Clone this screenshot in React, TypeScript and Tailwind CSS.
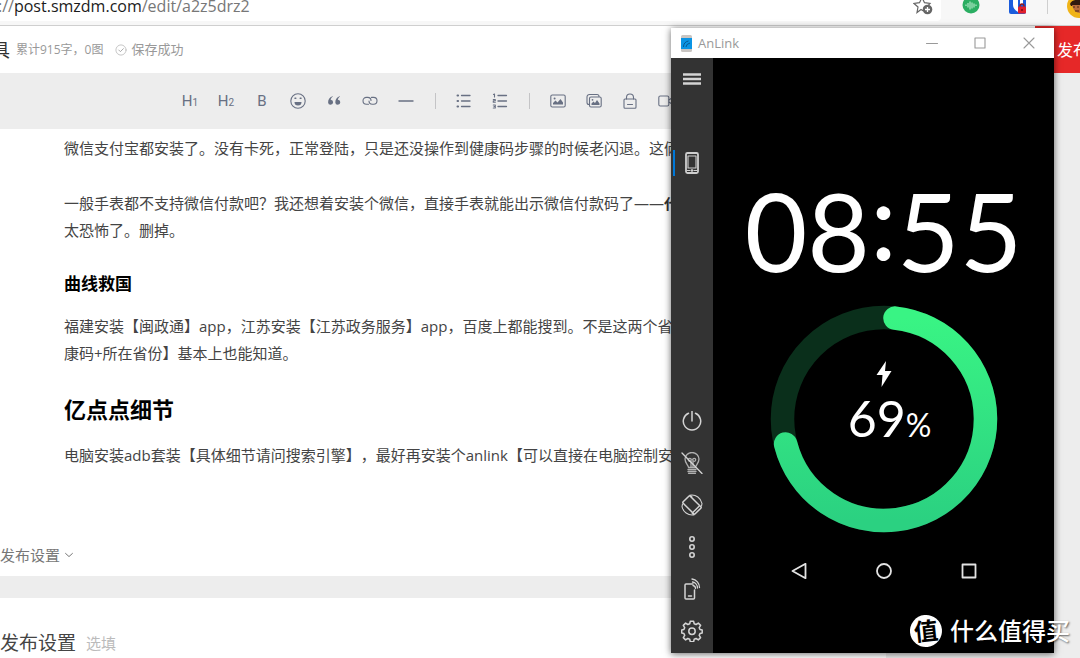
import React from "react";

interface IconProps {
  children: React.ReactNode;
  size?: string;
  box?: string;
}

const Icon: React.FC<IconProps> = ({ children, size = "size-4", box = "0 0 16 16" }) => (
  <svg
    className={size}
    viewBox={box}
    fill="none"
    stroke="currentColor"
    strokeWidth="1.1"
    strokeLinecap="round"
    strokeLinejoin="round"
    aria-hidden="true"
  >
    {children}
  </svg>
);

interface ToolProps {
  label: string;
  children: React.ReactNode;
}

const Tool: React.FC<ToolProps> = ({ label, children }) => (
  <button
    type="button"
    aria-label={label}
    className="flex h-9 w-9 shrink-0 items-center justify-center text-[#687083]"
  >
    {children}
  </button>
);

const Divider = () => (
  <div className="flex w-[22px] shrink-0 justify-center">
    <div className="h-4 w-px bg-[#c4c4c6]" />
  </div>
);

const SideButton: React.FC<ToolProps> = ({ label, children }) => (
  <button
    type="button"
    aria-label={label}
    className="flex size-[42px] items-center justify-center text-[#d4d4d4]"
  >
    {children}
  </button>
);

const BrowserBar = () => (
  <div className="flex h-[26px] items-start border-b border-[#cfcfcf] bg-[#f7f7f7]">
    <div className="flex h-[21px] flex-1 items-start justify-between rounded-br bg-white pr-2">
      <div className="-mt-1.5 -ml-0.5 text-base leading-6 whitespace-nowrap text-[#777]">
        ://<span className="text-[#1b1b1b]">post.smzdm.com</span>/edit/a2z5drz2
      </div>
      <button type="button" aria-label="收藏" className="-mt-1 text-[#666]">
        <svg className="size-5" viewBox="0 0 20 20" fill="none" aria-hidden="true">
          <path
            d="M10.500 15 8 13.500 4 16.500 5 11 1 7.500 6.500 6.700 9 1.500 11.500 6.700 17 7.500 15.500 9"
            stroke="currentColor"
            strokeWidth="1.200"
          />
          <circle cx="14.500" cy="13.500" r="4.800" fill="currentColor" />
          <path d="M12 13.500h5M14.500 11v5" stroke="#fff" strokeWidth="1.300" />
        </svg>
      </button>
    </div>
    <div className="flex w-[139px] items-start">
      <svg className="ml-[21px] h-[14px] w-[18px]" viewBox="0 0 18 14" aria-hidden="true">
        <circle cx="9" cy="5" r="8.500" fill="#2bae62" />
        <path
          d="M4 4.500v1.500M6 3v4.500M8 1.500v8M10 2.500v6M12 3.500v4M14 4.500v1.500"
          stroke="#c9f2d8"
          strokeWidth="1"
        />
      </svg>
      <svg className="ml-[29px] h-[14px] w-[18px]" viewBox="0 0 18 14" aria-hidden="true">
        <path d="M0 0h17v12a2 2 0 0 1-2 2H2a2 2 0 0 1-2-2z" fill="#1b5cdc" />
        <path d="M4 0h5v12Q4 9 4 5z" fill="#fff" />
        <path d="M11 0h3v4h-3z" fill="#fff" />
        <path d="M11 7V6a2 2 0 0 1 4 0v1" stroke="#8f1820" strokeWidth="1.300" fill="none" />
        <rect x="9" y="6.500" width="8" height="7" rx="1" fill="#e2202c" />
        <circle cx="13" cy="10" r="1" fill="#701018" />
      </svg>
      <div className="ml-5 h-[14px] w-px bg-[#cfcfcf]" />
      <svg className="ml-[19px] h-[18px] w-[13px]" viewBox="0 0 13 18" aria-hidden="true">
        <circle cx="12" cy="6" r="12" fill="#f0b419" />
        <path d="M3 4Q5-1 13 0v6H4z" fill="#30190e" />
        <path d="M5 5h8v8q-6 0-8-8z" fill="#b96c3d" />
        <path d="M6 7h2M10 7h2M8 11h4" stroke="#4d2817" strokeWidth="1" />
      </svg>
    </div>
  </div>
);

const PostHeader = () => (
  <header className="flex h-[47px] items-center bg-white">
    <span className="-ml-2 text-lg text-[#333]">具</span>
    <span className="ml-1.5 text-xs whitespace-nowrap text-[#999]">累计915字，0图</span>
    <span className="ml-3 flex items-center gap-1 text-[13px] whitespace-nowrap text-[#999]">
      <Icon size="size-3">
        <circle cx="8" cy="8" r="6.800" stroke="#bbb" />
        <path d="m5 8 2.200 2.200 4-4" />
      </Icon>
      保存成功
    </span>
    <button
      type="button"
      className="ml-auto h-full w-[45px] overflow-hidden bg-[#e62828] pl-[22px] text-left text-base whitespace-nowrap text-white"
    >
      发布
    </button>
  </header>
);

const Toolbar = () => (
  <div className="flex h-14 items-center overflow-hidden bg-[#ededed] pl-[172px]">
    <Tool label="一级标题">
      <span className="font-[Roboto] text-[15px]">
        H<span className="text-[10px]">1</span>
      </span>
    </Tool>
    <Tool label="二级标题">
      <span className="font-[Roboto] text-[15px]">
        H<span className="text-[10px]">2</span>
      </span>
    </Tool>
    <Tool label="加粗">
      <span className="font-[Roboto] text-[15px]">B</span>
    </Tool>
    <Tool label="表情">
      <Icon>
        <circle cx="8" cy="8" r="7.200" />
        <path d="M4.500 9h7a3.500 3.500 0 0 1-7 0z" fill="currentColor" stroke="none" />
        <path d="M5 5.300h.8M10.200 5.300h.8" strokeWidth="1.500" />
      </Icon>
    </Tool>
    <Tool label="引用">
      <Icon>
        <g fill="currentColor" stroke="none">
          <path d="M6.800 3.800C5.400 4.500 4.700 5.800 4.700 6.800a2.500 2.500 0 1 1-2.600 2.600C2 6.200 3.800 4 6.800 3.200z" />
          <path d="M14 3.800c-1.400.7-2.100 2-2.100 3a2.500 2.500 0 1 1-2.600 2.600C9.200 6.200 11 4 14 3.200z" />
        </g>
      </Icon>
    </Tool>
    <Tool label="链接">
      <Icon>
        <path d="M6.500 11.200H4.400a3.400 3.400 0 0 1 0-6.800h1.300C8 4.400 9 6 9 7.500" />
        <path d="M9.500 4.400h2.100a3.400 3.400 0 0 1 0 6.800h-1.300C8 11.200 7 9.600 7 8.100" />
      </Icon>
    </Tool>
    <Tool label="分割线">
      <Icon>
        <path d="M1 8h14" strokeWidth="1.400" />
      </Icon>
    </Tool>
    <Divider />
    <Tool label="无序列表">
      <Icon>
        <path d="M5.500 2.500H14M5.500 8H14M5.500 13.500H14" strokeWidth="1.300" />
        <path d="M1.500 2.500h.6M1.500 8h.6M1.500 13.500h.6" strokeWidth="2" />
      </Icon>
    </Tool>
    <Tool label="有序列表">
      <Icon>
        <path d="M6 2.500h8.500M6 8h8.500M6 13.500h8.500" strokeWidth="1.300" />
        <path d="m1.500 1.500 1-.5v3M1.300 6.500h2v1.300h-2v1.500h2M1.300 12h2v3h-2M2 13.500h1.300" />
      </Icon>
    </Tool>
    <Divider />
    <Tool label="图片">
      <Icon>
        <rect x=".8" y="2" width="14.400" height="12" rx="1.500" />
        <path d="M3 11.500V10l2.500-2.500L7.500 9.500 10.500 6l2.500 3.500v2z" fill="currentColor" stroke="none" />
        <circle cx="4.600" cy="5.400" r="1" fill="currentColor" stroke="none" />
      </Icon>
    </Tool>
    <Tool label="图集">
      <Icon>
        <rect x="3.500" y="4" width="11.700" height="10" rx="1.500" />
        <path d="M3 11.500a2 2 0 0 1-2-2V4a2.500 2.500 0 0 1 2.500-2.500H11A2 2 0 0 1 13 3.500" />
        <path d="M5.500 12v-1.500l2-2L9 10l2-3 2.500 3.500V12z" fill="currentColor" stroke="none" />
        <circle cx="6.500" cy="6.800" r=".9" fill="currentColor" stroke="none" />
      </Icon>
    </Tool>
    <Tool label="锁定内容">
      <Icon>
        <rect x="2" y="6" width="12" height="9.300" rx="1" />
        <path d="M4.500 6V4.500a3.500 3.500 0 0 1 7 0V6M5.500 11.500h5" />
      </Icon>
    </Tool>
    <Tool label="视频">
      <Icon>
        <rect x=".8" y="3" width="10" height="10" rx="1.500" />
        <path d="m10.800 7 4-2.500v7l-4-2.500" />
      </Icon>
    </Tool>
  </div>
);

const Article = () => (
  <article className="overflow-hidden bg-white pt-1.5 pb-[7px] text-[15px] leading-[27px] whitespace-nowrap text-[#444] [text-spacing-trim:space-all]">
    <div className="pl-16">
      <p>微信支付宝都安装了。没有卡死，正常登陆，只是还没操作到健康码步骤的时候老闪退。这俩太</p>
      <p className="mt-7">
        一般手表都不支持微信付款吧？我还想着安装个微信，直接手表就能出示微信付款码了——
        <strong className="text-[#333]">代</strong>
        <br />
        太恐怖了。删掉。
      </p>
      <h3 className="mt-[26px] text-[17px] leading-7 font-bold text-black">曲线救国</h3>
      <p className="mt-[15px]">
        福建安装【闽政通】app，江苏安装【江苏政务服务】app，百度上都能搜到。不是这两个省的
        <br />
        康码+所在省份】基本上也能知道。
      </p>
      <h2 className="mt-[26px] text-[22px] leading-8 font-bold text-black">亿点点细节</h2>
      <p className="mt-[17px]">
        电脑安装adb套装【具体细节请问搜索引擎】，最好再安装个anlink【可以直接在电脑控制安卓
      </p>
    </div>
    <button type="button" className="mt-[72px] flex h-7 items-center gap-1 text-[#777]">
      发布设置
      <Icon size="size-2.5">
        <path d="m2.500 5.500 5.500 5 5.500-5" strokeWidth="1.600" />
      </Icon>
    </button>
  </article>
);

const BatteryRing = () => (
  <div className="relative mt-5 size-[228px]">
    <svg className="size-full" viewBox="0 0 228 228" fill="none" aria-hidden="true">
      <defs>
        <linearGradient id="charge" x1="0" y1="0" x2="0" y2="1">
          <stop offset="0" stopColor="#39f484" />
          <stop offset="1" stopColor="#2bd181" />
        </linearGradient>
      </defs>
      <circle cx="114" cy="114" r="101.500" stroke="#0a2f1b" strokeWidth="23.500" />
      <path
        d="M125 13.100A101.500 101.500 0 1 1 15.600 139"
        stroke="url(#charge)"
        strokeWidth="23.500"
        strokeLinecap="round"
      />
    </svg>
    <div className="absolute inset-0 flex flex-col items-center pt-14 text-white">
      <svg className="h-[26px] w-4" viewBox="0 0 16 26" fill="currentColor" aria-hidden="true">
        <path d="M10 0 .5 14h6L5.500 26 15.500 10H9z" />
      </svg>
      <div className="ml-3 font-[Lato] text-[50px] leading-[62px]">
        69<span className="text-[32px]">%</span>
      </div>
    </div>
  </div>
);

const PhoneScreen = () => (
  <div className="flex flex-1 flex-col items-center bg-black">
    <time
      dateTime="08:55"
      className="mt-[117px] flex h-[110px] items-center font-[Lato] text-[108px] leading-[132px] text-white"
    >
      <span>08</span>
      <span className="pb-6">:</span>
      <span>55</span>
    </time>
    <BatteryRing />
    <nav className="mt-[30px] flex text-[#e3e3e3]">
      <button type="button" aria-label="返回" className="flex w-[85px] justify-center">
        <Icon>
          <path d="M1.500 8 14.500.8v14.400z" strokeWidth="1.800" />
        </Icon>
      </button>
      <button type="button" aria-label="主屏幕" className="flex w-[85px] justify-center">
        <Icon>
          <circle cx="8" cy="8" r="7" strokeWidth="1.800" />
        </Icon>
      </button>
      <button type="button" aria-label="最近任务" className="flex w-[85px] justify-center">
        <Icon>
          <rect x="1.500" y="1.500" width="13" height="13" strokeWidth="1.800" />
        </Icon>
      </button>
    </nav>
  </div>
);

const Sidebar = () => (
  <aside className="flex w-[42px] flex-col bg-[#333] pb-px">
    <SideButton label="菜单">
      <Icon size="size-5" box="0 0 20 20">
        <path d="M1 5.500h18M1 10h18M1 14.500h18" strokeWidth="2.600" strokeLinecap="butt" />
      </Icon>
    </SideButton>
    <div className="mt-[42px] flex h-[42px] items-center">
      <div className="ml-0.5 h-[26px] w-0.5 bg-[#0078d7]" />
      <button
        type="button"
        aria-label="设备"
        className="flex flex-1 justify-center pr-1 text-[#cfcfcf]"
      >
        <Icon size="h-6 w-4" box="0 0 16 24">
          <rect x="2" y="2" width="12" height="20" rx="1.500" strokeWidth="1.800" />
          <path d="M4 5h8v12H4zM3 19.500h3M10 19.500h3" />
          <circle cx="8" cy="19.500" r=".8" fill="currentColor" />
        </Icon>
      </button>
    </div>
    <div className="mt-auto">
      <SideButton label="电源">
        <Icon size="size-5" box="0 0 20 20">
          <path d="M6.500 2.300a8.700 8.700 0 1 0 7 0M10 0v10" strokeWidth="1.500" />
        </Icon>
      </SideButton>
      <SideButton label="关闭屏幕">
        <Icon size="size-[22px]" box="0 0 22 22">
          <g stroke="#b0b0b0" strokeWidth="1.300">
            <path d="M7.500 15.500c0-2.500-3.500-4-3.500-8.500a7 6.500 0 0 1 14 0c0 4.500-3.500 6-3.500 8.500z" />
            <path d="M7 17.500h8M7 19.500h8M7.500 21.300h7" />
            <path d="M10 15V9.500M12 15V9.500" />
            <circle cx="8.800" cy="7.800" r="1.500" />
            <circle cx="13.200" cy="7.800" r="1.500" />
          </g>
          <path d="m1 1 20 20.500" strokeWidth="1.300" />
        </Icon>
      </SideButton>
      <SideButton label="旋转">
        <Icon size="size-[22px]" box="0 0 22 22">
          <rect x="6" y="2.500" width="10" height="17" rx="1" transform="rotate(-45 11 11)" strokeWidth="1.500" />
          <path d="m12.300 18 5.800-5.800" strokeWidth="1.400" />
          <path d="M9 1.200c6-1 11 3 12 8.300l-.5 2.500M13 20.800c-6 1-11-3-12-8.300L1.500 10M9 1.200 11 3M13 20.800 11 19" />
        </Icon>
      </SideButton>
      <SideButton label="更多">
        <Icon size="h-6 w-3" box="0 0 12 24">
          <g strokeWidth="1.600">
            <circle cx="6" cy="4" r="2.200" />
            <circle cx="6" cy="12" r="2.200" />
            <circle cx="6" cy="20" r="2.200" />
          </g>
        </Icon>
      </SideButton>
      <SideButton label="投屏">
        <Icon size="size-[22px]" box="0 0 22 22">
          <path d="M12 6H5a1 1 0 0 0-1 1v13a1 1 0 0 0 1 1h7.500a1 1 0 0 0 1-1v-8M7.500 18h3" strokeWidth="1.500" />
          <path d="M12 7.500a3 3 0 0 1 2.500 3M11.500 4a6 6 0 0 1 5 6M11 1a8.500 8.500 0 0 1 7.500 8.500" strokeWidth="1.300" />
        </Icon>
      </SideButton>
      <SideButton label="设置">
        <Icon size="size-[22px]" box="0 0 22 22">
          <path
            d="m9.300 1.200-.6 2.500-1.900.8-2.200-1.400-2.300 2.300 1.400 2.200-.8 1.900-2.200.5v3l2.200.5.8 1.900-1.400 2.200 2.300 2.300 2.200-1.400 1.900.8.600 2.500h3.300l.6-2.500 1.900-.8 2.200 1.400 2.300-2.300-1.400-2.200.8-1.900 2.200-.5v-3l-2.200-.5-.8-1.900 1.400-2.200-2.300-2.300-2.200 1.400-1.900-.8-.6-2.500z"
            strokeWidth="1.500"
          />
          <circle cx="11" cy="11.300" r="3.200" strokeWidth="1.500" />
        </Icon>
      </SideButton>
    </div>
  </aside>
);

const AnLinkWindow = () => (
  <section className="absolute top-7 right-[26px] flex h-[625px] w-[383px] flex-col bg-white shadow-[0_1px_7px_rgba(0,0,0,0.6)]">
    <div className="flex h-[30px] items-center text-[#999]">
      <svg className="ml-2.5 h-[17px] w-[11px]" viewBox="0 0 11 17" aria-hidden="true">
        <rect width="11" height="17" rx="1.500" fill="#c9c5c2" />
        <path d="M0 3h11v11H0z" fill="#0b94e4" />
        <path d="M2.500 12q0-5 5-6M5 12q0-3 4-4" stroke="#075a91" fill="none" />
      </svg>
      <h1 className="ml-1.5 flex-1 text-[13px] leading-5">AnLink</h1>
      <button type="button" aria-label="最小化" className="flex w-12 justify-center">
        <Icon size="size-3" box="0 0 12 12">
          <path d="M.5 6.500h11" />
        </Icon>
      </button>
      <button type="button" aria-label="最大化" className="flex w-12 justify-center">
        <Icon size="size-3" box="0 0 12 12">
          <path d="M1 1h10v10H1z" />
        </Icon>
      </button>
      <button type="button" aria-label="关闭" className="flex w-[50px] justify-center">
        <Icon size="size-3" box="0 0 12 12">
          <path d="m1 1 10 10M11 1 1 11" />
        </Icon>
      </button>
    </div>
    <div className="flex flex-1">
      <Sidebar />
      <PhoneScreen />
    </div>
  </section>
);

const Watermark = () => (
  <div className="absolute right-2.5 bottom-[11px] flex items-center gap-2 text-2xl leading-8 font-medium text-white">
    <span className="flex size-8 -rotate-6 items-center justify-center rounded-full bg-white font-bold text-black">
      值
    </span>
    <span className="whitespace-nowrap [text-shadow:1px_1px_2px_rgba(0,0,0,0.6)]">什么值得买</span>
  </div>
);

const App = () => (
  <div className="relative min-h-screen overflow-hidden bg-[#ededed] font-['Open_Sans','Noto_Sans_CJK_SC',sans-serif]">
    <BrowserBar />
    <PostHeader />
    <Toolbar />
    <main className="mr-[194px]">
      <Article />
      <section className="mt-[22px] flex h-[60px] items-center gap-2.5 bg-white pt-[30px]">
        <h2 className="text-[19px] leading-8 text-[#444]">发布设置</h2>
        <span className="text-[15px] leading-8 text-[#bbb]">选填</span>
      </section>
    </main>
    <AnLinkWindow />
    <Watermark />
  </div>
);

export default App;
